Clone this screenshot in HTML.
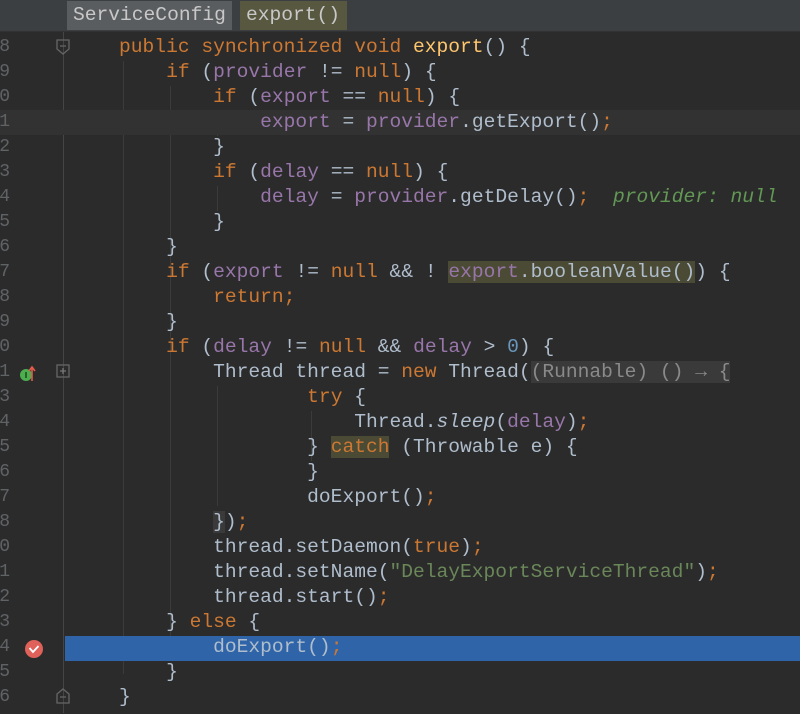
<!DOCTYPE html>
<html><head><meta charset="utf-8"><style>
body{margin:0;width:800px;height:713px;overflow:hidden;background:#2b2b2b;font-family:"Liberation Mono",monospace;position:relative}
.hdr{position:absolute;left:0;top:0;width:800px;height:31px;background:#3c3f41;border-bottom:1px solid #323232}
.crumb{position:absolute;top:1px;height:29px;line-height:29px;font-size:19.6px;color:#c8c8c8;padding:0 6px}
.wrap{position:absolute;left:0;top:1px;width:800px;height:713px}
.row{position:absolute;left:0;width:800px;height:25px}
.code{position:absolute;left:72px;top:0;white-space:pre;font-size:19.6px;line-height:25px;color:#afbdcc}
.ln{position:absolute;left:-6px;width:16px;text-align:right;font-size:18px;line-height:25px;color:#606366}
.k{color:#cc7832}.f{color:#9876aa}.n{color:#6897bb}.s{color:#6a8759}.c{color:#629755;font-style:italic}
.g{position:absolute;top:32px;bottom:0;width:1px;background:#3b3b3b}
</style></head><body>
<div class="hdr"></div>
<div class="crumb" style="left:67px;width:153px;background:#5a5d60">ServiceConfig</div>
<div class="crumb" style="left:240px;width:95px;background:#585841">export()</div>
<div class="g" style="left:63px;background:#454545"></div>
<div class="wrap">
<div class="g" style="left:123px;top:60px;bottom:40px"></div>
<div class="g" style="left:170px;top:85px;bottom:65px"></div>
<div class="g" style="left:217px;top:110px;height:25px"></div>
<div class="g" style="left:217px;top:185px;height:25px"></div>
<div class="g" style="left:217px;top:385px;height:120px"></div>
<div class="g" style="left:311px;top:410px;height:50px"></div>

<div class="row" style="top:34px"><span class="ln">8</span><span class="code"><span class="k">    public synchronized void </span><span style="color:#ffc66d">export</span>() {</span></div>
<div class="row" style="top:59px"><span class="ln">9</span><span class="code">        <span class="k">if</span> (<span class="f">provider</span> != <span class="k">null</span>) {</span></div>
<div class="row" style="top:84px"><span class="ln">0</span><span class="code">            <span class="k">if</span> (<span class="f">export</span> == <span class="k">null</span>) {</span></div>
<div class="row" style="top:109px;background:#323232"><span class="ln">1</span><span class="code">                <span class="f">export</span> = <span class="f">provider</span>.getExport()<span class="k">;</span></span></div>
<div class="row" style="top:134px"><span class="ln">2</span><span class="code">            }</span></div>
<div class="row" style="top:159px"><span class="ln">3</span><span class="code">            <span class="k">if</span> (<span class="f">delay</span> == <span class="k">null</span>) {</span></div>
<div class="row" style="top:184px"><span class="ln">4</span><span class="code">                <span class="f">delay</span> = <span class="f">provider</span>.getDelay()<span class="k">;</span>  <span class="c">provider: null</span></span></div>
<div class="row" style="top:209px"><span class="ln">5</span><span class="code">            }</span></div>
<div class="row" style="top:234px"><span class="ln">6</span><span class="code">        }</span></div>
<div class="row" style="top:259px"><span class="ln">7</span><span class="code">        <span class="k">if</span> (<span class="f">export</span> != <span class="k">null</span> &amp;&amp; ! <span style="background:#4a4a35"><span class="f">export</span>.booleanValue()</span>) {</span></div>
<div class="row" style="top:284px"><span class="ln">8</span><span class="code">            <span class="k">return;</span></span></div>
<div class="row" style="top:309px"><span class="ln">9</span><span class="code">        }</span></div>
<div class="row" style="top:334px"><span class="ln">0</span><span class="code">        <span class="k">if</span> (<span class="f">delay</span> != <span class="k">null</span> &amp;&amp; <span class="f">delay</span> &gt; <span class="n">0</span>) {</span></div>
<div class="row" style="top:359px"><span class="ln">1</span><span class="code">            Thread thread = <span class="k">new</span> Thread(<span style="background:#3a3a3a;color:#8a8a8a">(Runnable) () → {</span></span></div>
<div class="row" style="top:384px"><span class="ln">3</span><span class="code">                    <span class="k">try</span> {</span></div>
<div class="row" style="top:409px"><span class="ln">4</span><span class="code">                        Thread.<i>sleep</i>(<span class="f">delay</span>)<span class="k">;</span></span></div>
<div class="row" style="top:434px"><span class="ln">5</span><span class="code">                    } <span class="k" style="background:#4a4a35">catch</span> (Throwable e) {</span></div>
<div class="row" style="top:459px"><span class="ln">6</span><span class="code">                    }</span></div>
<div class="row" style="top:484px"><span class="ln">7</span><span class="code">                    doExport()<span class="k">;</span></span></div>
<div class="row" style="top:509px"><span class="ln">8</span><span class="code">            <span style="background:#3a3a3a">}</span>)<span class="k">;</span></span></div>
<div class="row" style="top:534px"><span class="ln">0</span><span class="code">            thread.setDaemon(<span class="k">true</span>)<span class="k">;</span></span></div>
<div class="row" style="top:559px"><span class="ln">1</span><span class="code">            thread.setName(<span class="s">"DelayExportServiceThread"</span>)<span class="k">;</span></span></div>
<div class="row" style="top:584px"><span class="ln">2</span><span class="code">            thread.start()<span class="k">;</span></span></div>
<div class="row" style="top:609px"><span class="ln">3</span><span class="code">        } <span class="k">else</span> {</span></div>
<div class="row" style="top:635px;height:25px;left:65px;width:735px;background:#2f65a8"></div>
<div class="row" style="top:634px"><span class="ln">4</span><span class="code">            doExport()<span class="k">;</span></span></div>
<div class="row" style="top:659px"><span class="ln">5</span><span class="code">        }</span></div>
<div class="row" style="top:684px"><span class="ln">6</span><span class="code">    }</span></div>

<svg style="position:absolute;left:56px;top:38px" width="15" height="18"><path d="M1 1H13V10L7 15L1 10Z M4 7H10" fill="none" stroke="#666" stroke-width="1.3"/></svg>
<svg style="position:absolute;left:56px;top:363px" width="15" height="15"><rect x="1" y="1" width="12" height="12" fill="none" stroke="#666" stroke-width="1.3"/><path d="M4 7H10M7 4V10" stroke="#777" stroke-width="1.3"/></svg>
<svg style="position:absolute;left:56px;top:685px" width="15" height="18"><path d="M1 17H13V8L7 3L1 8Z M4 11H10" fill="none" stroke="#666" stroke-width="1.3"/></svg>
<svg style="position:absolute;left:18px;top:364px" width="20" height="18"><circle cx="8" cy="10" r="6" fill="#4cae4f"/><path d="M8 7V13" stroke="#1c4a1c" stroke-width="1.5"/><path d="M14 16V3M11 6L14 2L17 6" fill="none" stroke="#e25b4b" stroke-width="1.6"/></svg>
<svg style="position:absolute;left:24px;top:638px" width="20" height="20"><circle cx="10" cy="10" r="9" fill="#e0605a"/><path d="M5.5 9L9 13L14.5 7" fill="none" stroke="#fff" stroke-width="1.8"/></svg>
</div>
</body></html>
